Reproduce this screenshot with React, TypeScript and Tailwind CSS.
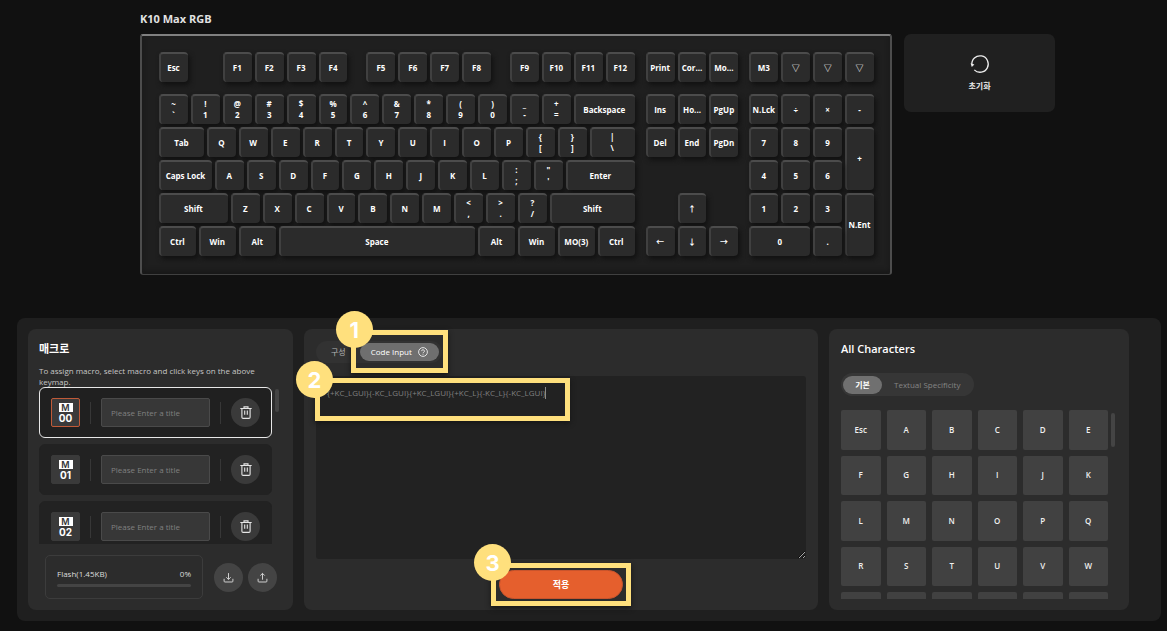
import { useState } from 'react';
import type { ReactNode } from 'react';

type KeySpec = {
  row: number;
  col: number;
  span: number;
  label: string;
  shifted?: string;
  rowSpan?: number;
};

/* Lays keys of one row side by side; widths and positions are in quarter units. */
function keyRow(row: number, start: number, keys: (string | [string, number])[]): KeySpec[] {
  let col = start;
  return keys.map((entry) => {
    const [text, span] = typeof entry === 'string' ? [entry, 4] : entry;
    const parts = text.split(' / ');
    const spec: KeySpec = {
      row,
      col,
      span,
      label: parts[parts.length - 1],
      shifted: parts.length > 1 ? parts[0] : undefined,
    };
    col += span;
    return spec;
  });
}

const KEYS: KeySpec[] = [
  ...keyRow(1, 0, ['Esc']),
  ...keyRow(1, 8, ['F1', 'F2', 'F3', 'F4']),
  ...keyRow(1, 26, ['F5', 'F6', 'F7', 'F8']),
  ...keyRow(1, 44, ['F9', 'F10', 'F11', 'F12']),
  ...keyRow(1, 61, ['Print', 'Cor...', 'Mo...']),
  ...keyRow(1, 74, ['M3', '▽', '▽', '▽']),
  ...keyRow(3, 0, ['~ / `', '! / 1', '@ / 2', '# / 3', '$ / 4', '% / 5', '^ / 6', '& / 7', '* / 8', '( / 9', ') / 0', '_ / -', '+ / =', ['Backspace', 8]]),
  ...keyRow(3, 61, ['Ins', 'Ho...', 'PgUp']),
  ...keyRow(3, 74, ['N.Lck', '÷', '×', '-']),
  ...keyRow(4, 0, [['Tab', 6], 'Q', 'W', 'E', 'R', 'T', 'Y', 'U', 'I', 'O', 'P', '{ / [', '} / ]', ['| / \\', 6]]),
  ...keyRow(4, 61, ['Del', 'End', 'PgDn']),
  ...keyRow(4, 74, ['7', '8', '9']),
  { row: 4, col: 86, span: 4, rowSpan: 2, label: '+' },
  ...keyRow(5, 0, [['Caps Lock', 7], 'A', 'S', 'D', 'F', 'G', 'H', 'J', 'K', 'L', ': / ;', '" / \'', ['Enter', 9]]),
  ...keyRow(5, 74, ['4', '5', '6']),
  ...keyRow(6, 0, [['Shift', 9], 'Z', 'X', 'C', 'V', 'B', 'N', 'M', '< / ,', '> / .', '? / /', ['Shift', 11]]),
  ...keyRow(6, 65, ['↑']),
  ...keyRow(6, 74, ['1', '2', '3']),
  { row: 6, col: 86, span: 4, rowSpan: 2, label: 'N.Ent' },
  ...keyRow(7, 0, [['Ctrl', 5], ['Win', 5], ['Alt', 5], ['Space', 25], ['Alt', 5], ['Win', 5], ['MO(3)', 5], ['Ctrl', 5]]),
  ...keyRow(7, 61, ['←', '↓', '→']),
  ...keyRow(7, 74, [['0', 8], '.']),
];

const CHARACTERS = ['Esc', ...'ABCDEFGHIJKLMNOPQRSTUVWXYZ123'.split('')];

function KeyCap({ spec }: { spec: KeySpec }) {
  return (
    <button
      type="button"
      className="mr-[3px] flex min-w-0 flex-col items-center justify-center rounded-[4px] border-t-2 border-l-2 border-t-[#4c4c4c] border-l-[#404040] bg-[#2b2b2b] pr-[2px] pb-[2px] text-[8px] leading-[11px] font-bold text-white shadow-[2px_3px_5px_#111111]"
      style={{
        gridRow: `${spec.row} / span ${spec.rowSpan ?? 1}`,
        gridColumn: `${spec.col + 1} / span ${spec.span}`,
      }}
    >
      {spec.shifted && <span>{spec.shifted}</span>}
      <span className="whitespace-nowrap">{spec.label}</span>
    </button>
  );
}

function Callout({ step, className, badge }: { step: number; className: string; badge: string }) {
  return (
    <div className={`pointer-events-none absolute z-10 border-[5px] border-[#ffe07d] shadow-[0_2px_5px_#151515] ${className}`}>
      <span className={`absolute flex size-[37px] items-center justify-center rounded-full bg-[#ffe07d] font-['Inter'] text-[22px] leading-none font-bold text-white ${badge}`}>
        {step}
      </span>
    </div>
  );
}

function TrashIcon() {
  return (
    <svg viewBox="0 0 12 13" className="h-[13px] w-[12px]" fill="none" stroke="#e6e6e6" strokeWidth="1.1">
      <path d="M.3 2.5h11.4M4 2.3V.9h4v1.4M1.9 2.7v8.5c0 .8.4 1.2 1.2 1.2h5.8c.8 0 1.2-.4 1.2-1.2V2.7M4.7 4.6v4.2M7.3 4.6v4.2" />
    </svg>
  );
}

function TransferIcon({ up }: { up?: boolean }) {
  return (
    <svg viewBox="0 0 12 12" className="size-[11px]" fill="none" stroke="#dcdcdc" strokeWidth="1">
      <path d="M1.2 7.4v2.6c0 .6.3.9.9.9h7.8c.6 0 .9-.3.9-.9V7.4" />
      {up ? <path d="M6 8.4V1.5M3.6 3.9 6 1.5 8.4 3.9" /> : <path d="M6 1.2v6.9M3.6 5.7 6 8.1l2.4-2.4" />}
    </svg>
  );
}

function MacroRow({ id, selected, onSelect }: { id: string; selected: boolean; onSelect: () => void }) {
  return (
    <li
      className={`flex h-[51px] shrink-0 items-center gap-[10px] rounded-[6px] border px-[11px] ${
        selected ? 'border-[#e8e8e8] bg-[#202020]' : 'border-[#222222] bg-[#222222]'
      }`}
    >
      <button
        type="button"
        onClick={onSelect}
        className={`flex size-[29px] shrink-0 flex-col items-center justify-center gap-px rounded-[2px] border bg-[#3a3a3a] font-['Inter'] text-white ${
          selected ? 'border-[#c05a38]' : 'border-[#3a3a3a]'
        }`}
      >
        <span className="w-[14px] bg-white text-center text-[9px] leading-[9px] font-semibold text-[#333333]">M</span>
        <span className="text-[10px] leading-[10px] font-bold">{id}</span>
      </button>
      <span className="h-[22px] w-px bg-[#373737]" />
      <input
        type="text"
        aria-label={`Title of macro ${id}`}
        placeholder="Please Enter a title"
        className="h-[29px] min-w-0 flex-1 rounded-[2px] border border-[#4a4a4a] bg-[#373737] px-[9px] text-[8px] text-white placeholder:text-[#808080]"
      />
      <span className="h-[22px] w-px bg-[#373737]" />
      <button
        type="button"
        aria-label={`Delete macro ${id}`}
        className="flex size-[29px] shrink-0 items-center justify-center rounded-full bg-[#3a3a3a]"
      >
        <TrashIcon />
      </button>
    </li>
  );
}

function RoundButton({ label, children }: { label: string; children: ReactNode }) {
  return (
    <button type="button" aria-label={label} className="flex size-[29px] items-center justify-center rounded-full bg-[#444444]">
      {children}
    </button>
  );
}

export default function App() {
  const [selected, setSelected] = useState('00');
  const [code, setCode] = useState('{+KC_LGUI}{-KC_LGUI}{+KC_LGUI}{+KC_L}{-KC_L}{-KC_LGUI}');

  return (
    <main className="min-h-screen bg-[#111111] pt-[11px] pb-[9px] font-['Open_Sans','Noto_Sans_CJK_KR',sans-serif] text-white">
      <section className="pl-[140px]">
        <h1 className="text-[11px] leading-4 font-bold text-[#e2e2e2]">K10 Max RGB</h1>
        <div className="mt-[7px] flex items-start gap-3">
          <div className="w-full max-w-[752px] rounded-[3px] border-x-2 border-t-2 border-b border-x-[#4d4d4d] border-t-[#808080] border-b-[#404040] bg-[#1f1f1f] pt-4 pr-[13px] pb-[18px] pl-[17px] shadow-[inset_0_-3px_5px_#181818]">
            <div className="grid grid-cols-[repeat(90,minmax(0,1fr))] grid-rows-[30px_6px_30px_30px_30px_30px_30px] gap-y-[3px]">
              {KEYS.map((spec, i) => (
                <KeyCap key={i} spec={spec} />
              ))}
            </div>
          </div>
          <button
            type="button"
            className="flex h-[78px] w-[151px] shrink-0 flex-col items-center justify-center gap-[5px] rounded-[7px] bg-[#202020] text-[8px] leading-[14px] font-bold text-[#e8e8e8]"
          >
            <svg viewBox="0 0 20 20" className="size-5" fill="none" stroke="#ededed" strokeWidth="1.3">
              <path d="M1.9 11A8.2 8.2 0 1 1 4.3 15.9" />
              <path d="M.6 9.2 4.4 10.6 1.8 13Z" fill="#ededed" stroke="none" />
            </svg>
            초기화
          </button>
        </div>
      </section>

      <section className="mt-[43px] mr-[6px] ml-[17px] flex gap-[11px] rounded-[8px] bg-[#1f1f1f] py-[11px] pr-8 pl-[11px]">
        <div className="w-[265px] shrink-0 rounded-[8px] bg-[#2c2c2c] px-[11px] pt-3 pb-[11px]">
          <h2 className="text-[11px] leading-4 font-bold">매크로</h2>
          <p className="mt-2 text-[8px] leading-[11px] text-[#c6c6c6]">
            To assign macro, select macro and click keys on the above keymap.
          </p>
          <div className="flex h-[157px] items-start gap-[3px]">
            <ul className="flex h-full min-w-0 flex-1 flex-col gap-[6px] overflow-hidden">
              {['00', '01', '02'].map((id) => (
                <MacroRow key={id} id={id} selected={id === selected} onSelect={() => setSelected(id)} />
              ))}
            </ul>
            <span className="mt-[2px] h-[23px] w-[4px] rounded-full bg-[#444444]" />
            <span className="w-0" />
          </div>
          <div className="mt-[11px] flex items-center gap-[5px] pr-[5px] pl-[6px]">
            <div className="mr-[6px] h-11 flex-1 rounded-[5px] border border-[#3c3c3c] px-[11px] pt-[11px] text-[8px] leading-[14px] text-[#dddddd]">
              <div className="flex justify-between">
                <span>Flash(1.45KB)</span>
                <span>0%</span>
              </div>
              <div className="mt-[3px] h-[3px] rounded-full bg-[#444444]" />
            </div>
            <RoundButton label="Import macros">
              <TransferIcon />
            </RoundButton>
            <RoundButton label="Export macros">
              <TransferIcon up />
            </RoundButton>
          </div>
        </div>

        <div className="flex min-w-0 flex-1 flex-col rounded-[8px] bg-[#2c2c2c] px-3 pt-3 pb-[11px]">
          <div className="flex h-[22px] items-center self-start rounded-full bg-[#323232] pr-[3px]">
            <button type="button" className="pr-[14px] pl-[15px] text-[8px] leading-[18px] text-[#b5b5b5]">
              구성
            </button>
            <div className="relative">
              <button
                type="button"
                className="flex h-[18px] items-center gap-[6px] rounded-full bg-[#6f6f6f] px-[11px] text-[8px] leading-[18px] font-medium text-white"
              >
                Code Input
                <svg viewBox="0 0 10 10" className="size-[10px]" fill="none" stroke="#ffffff" strokeWidth="0.8">
                  <circle cx="5" cy="5" r="4.4" />
                  <path d="M3.6 4.1a1.4 1.4 0 1 1 2 1.3c-.4.2-.6.4-.6.8M5 6.9v.8" />
                </svg>
              </button>
              <Callout step={1} className="-top-[13px] -right-[9px] -bottom-3 -left-[9px]" badge="-top-6 -left-5" />
            </div>
          </div>
          <div className="relative mt-[13px] flex">
            <textarea
              aria-label="Macro code"
              value={code}
              onChange={(e) => setCode(e.target.value)}
              spellCheck={false}
              className="h-[183px] w-full rounded-[3px] bg-[#222222] px-[11px] py-[11px] text-[8px] leading-3 text-[#808080]"
            />
            <span className="absolute top-[11px] left-[229px] h-3 w-px bg-[#8a8a8a]" />
            <Callout step={2} className="top-[2px] -left-px h-[43px] w-[255px]" badge="-top-[22px] -left-6" />
          </div>
          <div className="relative mt-[11px] self-center">
            <button
              type="button"
              className="h-[29px] w-[124px] rounded-full border border-[#c9542c] bg-[#e55f2d] text-[9px] leading-none font-bold text-white"
            >
              적용
            </button>
            <Callout step={3} className="-inset-x-2 -inset-y-[7px]" badge="-top-6 -left-[22px]" />
          </div>
        </div>

        <div className="w-[300px] shrink-0 rounded-[8px] bg-[#2c2c2c] px-3 pt-3 pb-[11px]">
          <h2 className="text-[11px] leading-4 font-semibold">All Characters</h2>
          <div className="mt-4 flex h-[23px] w-fit items-center rounded-full bg-[#363636] px-[2px] text-[8px]">
            <button type="button" className="h-[18px] w-[39px] rounded-full bg-[#707070] leading-[18px] font-bold">
              기본
            </button>
            <button type="button" className="px-3 leading-[18px] text-[#858585]">
              Textual Specificity
            </button>
          </div>
          <div className="mt-[14px] flex items-start gap-[3px]">
            <div className="grid h-[189px] w-[267px] auto-rows-max grid-cols-6 gap-[6px] overflow-y-auto [scrollbar-width:none]">
              {CHARACTERS.map((ch) => (
                <button key={ch} type="button" className="aspect-square rounded-[2px] bg-[#414141] text-[8px] font-semibold text-[#f0f0f0]">
                  {ch}
                </button>
              ))}
            </div>
            <span className="mt-[3px] h-[34px] w-[4px] rounded-full bg-[#444444]" />
          </div>
        </div>
      </section>
    </main>
  );
}
